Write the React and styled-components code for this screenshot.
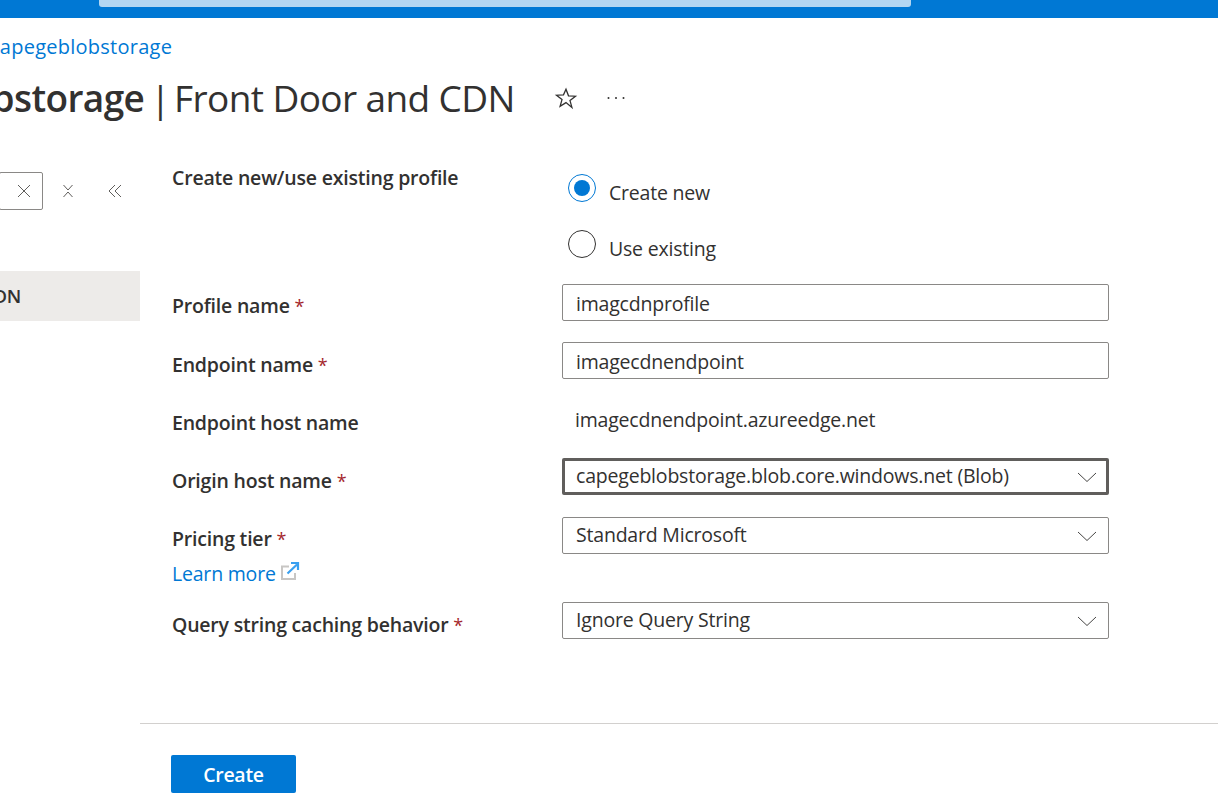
import React from "react";
import styled, { createGlobalStyle } from "styled-components";

const Global = createGlobalStyle`
  html, body { margin: 0; padding: 0; background: #fff; }
  body { width: 1218px; height: 797px; overflow: hidden; font-family: "Open Sans", "Noto Sans", "Liberation Sans", sans-serif; color: #323130; }
`;

const Page = styled.div`
  width: 1218px;
  height: 797px;
  overflow: hidden;
  display: flex;
  flex-direction: column;
`;
const TopBar = styled.header`
  height: 18px;
  flex: none;
  background: #0078d4;
  padding-left: 99px;
`;
const SearchBar = styled.div`
  width: 812px;
  height: 7px;
  background: #b3d6f2;
  border-radius: 0 0 3px 3px;
`;
const Breadcrumb = styled.a`
  display: block;
  margin: 16px 0 0 -10px;
  height: 26px;
  line-height: 26px;
  font-size: 20px;
  letter-spacing: 0.25px;
  color: #0078d4;
  white-space: nowrap;
`;
const TitleRow = styled.div`
  display: flex;
  align-items: center;
  height: 50px;
  margin-top: 13px;
  margin-left: -185px;
`;
const Title = styled.h1`
  margin: 0;
  flex: none;
  font-size: 37px;
  font-weight: 400;
  letter-spacing: -0.6px;
  line-height: 50px;
  white-space: nowrap;
  color: #323130;
  b { font-weight: 600; }
`;
const Separator = styled.span`
  margin: 0 -5px 0 -3px;
`;
const StarButton = styled.span`
  display: flex;
  flex: none;
  width: 24px;
  margin-left: 39px;
`;
const MoreButton = styled.span`
  display: flex;
  flex: none;
  margin-left: 28px;
`;
const Body = styled.div`
  display: flex;
  flex: 1;
  min-height: 0;
`;
const Sidebar = styled.aside`
  width: 140px;
  flex: none;
  padding-top: 49px;
`;
const FilterRow = styled.div`
  display: flex;
  align-items: center;
  height: 38px;
`;
const FilterBox = styled.div`
  height: 36px;
  margin-left: -1px;
  border: 1px solid #8a8886;
  border-radius: 2px;
  display: flex;
  align-items: center;
  justify-content: flex-end;
  padding-right: 11px;
  box-sizing: content-box;
  width: 31px;
`;
const ToolIcon = styled.span`
  display: flex;
  margin-left: ${p => p.$gap}px;
`;
const NavItem = styled.div`
  margin-top: 61px;
  height: 50px;
  line-height: 50px;
  background: #edebe9;
  font-size: 18.5px;
  font-weight: 600;
  letter-spacing: -0.3px;
  text-indent: -18px;
  overflow: hidden;
  white-space: nowrap;
`;
const Main = styled.main`
  flex: 1;
  display: flex;
  flex-direction: column;
`;
const Form = styled.form`
  padding: 42px 0 0 31px;
  height: 600px;
  box-sizing: border-box;
  margin: 0;
`;
const Row = styled.div`
  display: grid;
  grid-template-columns: 391px 547px;
  height: ${p => p.$h}px;
`;
const Label = styled.label`
  display: block;
  margin-left: 1px;
  font-size: 19.5px;
  font-weight: 600;
  letter-spacing: -0.2px;
  line-height: 26px;
  color: #323130;
  white-space: nowrap;
  padding-top: ${p => p.$top || 0}px;
  i { font-style: normal; color: #a4262c; font-weight: 400; font-size: 18px; }
`;
const RadioGroup = styled.div`
  display: flex;
  flex-direction: column;
  gap: 28px;
  padding: 9px 0 0 6px;
`;
const RadioRow = styled.div`
  display: flex;
  align-items: flex-start;
  gap: 13px;
  height: 28px;
  font-size: 19.5px;
  letter-spacing: -0.2px;
  line-height: 28px;
`;
const RadioText = styled.span`
  padding-top: 5px;
  color: #323130;
`;
const RadioCircle = styled.span`
  flex: none;
  width: 28px;
  height: 28px;
  box-sizing: border-box;
  border-radius: 50%;
  border: 1px solid ${p => (p.$on ? "#0078d4" : "#323130")};
  display: flex;
  align-items: center;
  justify-content: center;
  &::after {
    content: "";
    display: ${p => (p.$on ? "block" : "none")};
    width: 16px;
    height: 16px;
    border-radius: 50%;
    background: #0078d4;
  }
`;
const Input = styled.div`
  height: 37px;
  box-sizing: border-box;
  border: ${p => (p.$focus ? "3px solid #605e5c" : "1px solid #8a8886")};
  border-radius: 2px;
  padding-left: ${p => (p.$focus ? 11 : 13)}px;
  padding-right: ${p => (p.$focus ? 9 : 11)}px;
  padding-top: ${p => (p.$select ? 0 : 2)}px;
  padding-bottom: ${p => (p.$select ? 2 : 0)}px;
  display: flex;
  align-items: center;
  justify-content: space-between;
  font-size: 19.5px;
  letter-spacing: -0.2px;
  color: #323130;
  white-space: nowrap;
`;
const ChevronIcon = styled.svg`
  margin-top: 2px;
`;
const Plain = styled.div`
  font-size: 19.5px;
  letter-spacing: -0.2px;
  line-height: 26px;
  padding: 7px 0 0 13px;
  color: #323130;
`;
const LearnMore = styled.a`
  display: flex;
  align-items: center;
  gap: 5px;
  margin: 9px 0 0 0;
  font-size: 19.5px;
  letter-spacing: -0.2px;
  line-height: 26px;
  color: #0078d4;
  padding-left: 1px;
`;
const ExternalIcon = styled.svg`
  margin: -6px 0 0 -1px;
`;
const Footer = styled.footer`
  border-top: 1px solid #d2d0ce;
  padding: 31px 0 0 31px;
`;
const Primary = styled.button`
  width: 125px;
  height: 38px;
  border: 0;
  border-radius: 2px;
  background: #0078d4;
  color: #fff;
  font: 600 19.5px "Open Sans", "Noto Sans", sans-serif;
  letter-spacing: -0.28px;
  padding: 0;
`;

const Chevron = () => (
  <ChevronIcon width="20" height="12" viewBox="0 0 20 12" fill="none" stroke="#323130" strokeWidth="0.9">
    <path d="M1 2l9 8.5L19 2" />
  </ChevronIcon>
);
const Cross = ({ size = 14, color = "#605e5c" }) => (
  <svg width={size} height={size} viewBox="0 0 14 14" fill="none" stroke={color} strokeWidth="1">
    <path d="M1 1l12 12M13 1L1 13" />
  </svg>
);

export default function App() {
  return (
    <Page>
      <Global />
      <TopBar><SearchBar /></TopBar>
      <Breadcrumb>capegeblobstorage</Breadcrumb>
      <TitleRow>
        <Title><b>capegeblobstorage</b> <Separator>|</Separator> Front Door and CDN</Title>
        <StarButton>
          <svg width="24" height="24" viewBox="0 0 24 24" fill="none" stroke="#323130" strokeWidth="1.3">
            <path d="M12 3.2l2.5 6.6 7 .4-5.5 4.4 1.9 6.8L12 16.6l-5.9 3.8L8 13.6 2.5 9.2l7-.4z" />
          </svg>
        </StarButton>
        <MoreButton>
          <svg width="20" height="4" viewBox="0 0 20 4" fill="#323130">
            <circle cx="2.5" cy="2" r="1" /><circle cx="10" cy="2" r="1" /><circle cx="17.5" cy="2" r="1" />
          </svg>
        </MoreButton>
      </TitleRow>
      <Body>
        <Sidebar>
          <FilterRow>
            <FilterBox><Cross size={14} /></FilterBox>
            <ToolIcon $gap={19}>
              <svg width="12" height="14" viewBox="0 0 12 14" fill="none" stroke="#605e5c" strokeWidth="1">
                <path d="M1.5 1l4.5 5 4.5-5M1.5 13L6 8l4.5 5" />
              </svg>
            </ToolIcon>
            <ToolIcon $gap={34}>
              <svg width="14" height="14" viewBox="0 0 14 14" fill="none" stroke="#605e5c" strokeWidth="1">
                <path d="M7 1L1 7l6 6M13 1L7 7l6 6" />
              </svg>
            </ToolIcon>
          </FilterRow>
          <NavItem>CDN</NavItem>
        </Sidebar>
        <Main>
          <Form>
            <Row $h={119}>
              <Label>Create new/use existing profile</Label>
              <RadioGroup>
                <RadioRow><RadioCircle $on /><RadioText>Create new</RadioText></RadioRow>
                <RadioRow><RadioCircle /><RadioText>Use existing</RadioText></RadioRow>
              </RadioGroup>
            </Row>
            <Row $h={58}>
              <Label $top={9}>Profile name <i>*</i></Label>
              <Input>imagcdnprofile</Input>
            </Row>
            <Row $h={58}>
              <Label $top={10}>Endpoint name <i>*</i></Label>
              <Input>imagecdnendpoint</Input>
            </Row>
            <Row $h={58}>
              <Label $top={10}>Endpoint host name</Label>
              <Plain>imagecdnendpoint.azureedge.net</Plain>
            </Row>
            <Row $h={59}>
              <Label $top={10}>Origin host name <i>*</i></Label>
              <Input $focus $select>capegeblobstorage.blob.core.windows.net (Blob)<Chevron /></Input>
            </Row>
            <Row $h={85}>
              <div>
                <Label $top={9}>Pricing tier <i>*</i></Label>
                <LearnMore>Learn more
                  <ExternalIcon width="20" height="20" viewBox="0 0 20 20" fill="none">
                    <path d="M9 5.5H2V18h13v-6" stroke="#c8c6c4" strokeWidth="2" />
                    <path d="M7.5 12.5L17 3.5M11 2h7v7" stroke="#3aa0f0" strokeWidth="2.2" />
                  </ExternalIcon>
                </LearnMore>
              </div>
              <Input $select>Standard Microsoft<Chevron /></Input>
            </Row>
            <Row $h={60}>
              <Label $top={10}>Query string caching behavior <i>*</i></Label>
              <Input $select>Ignore Query String<Chevron /></Input>
            </Row>
          </Form>
          <Footer><Primary>Create</Primary></Footer>
        </Main>
      </Body>
    </Page>
  );
}
